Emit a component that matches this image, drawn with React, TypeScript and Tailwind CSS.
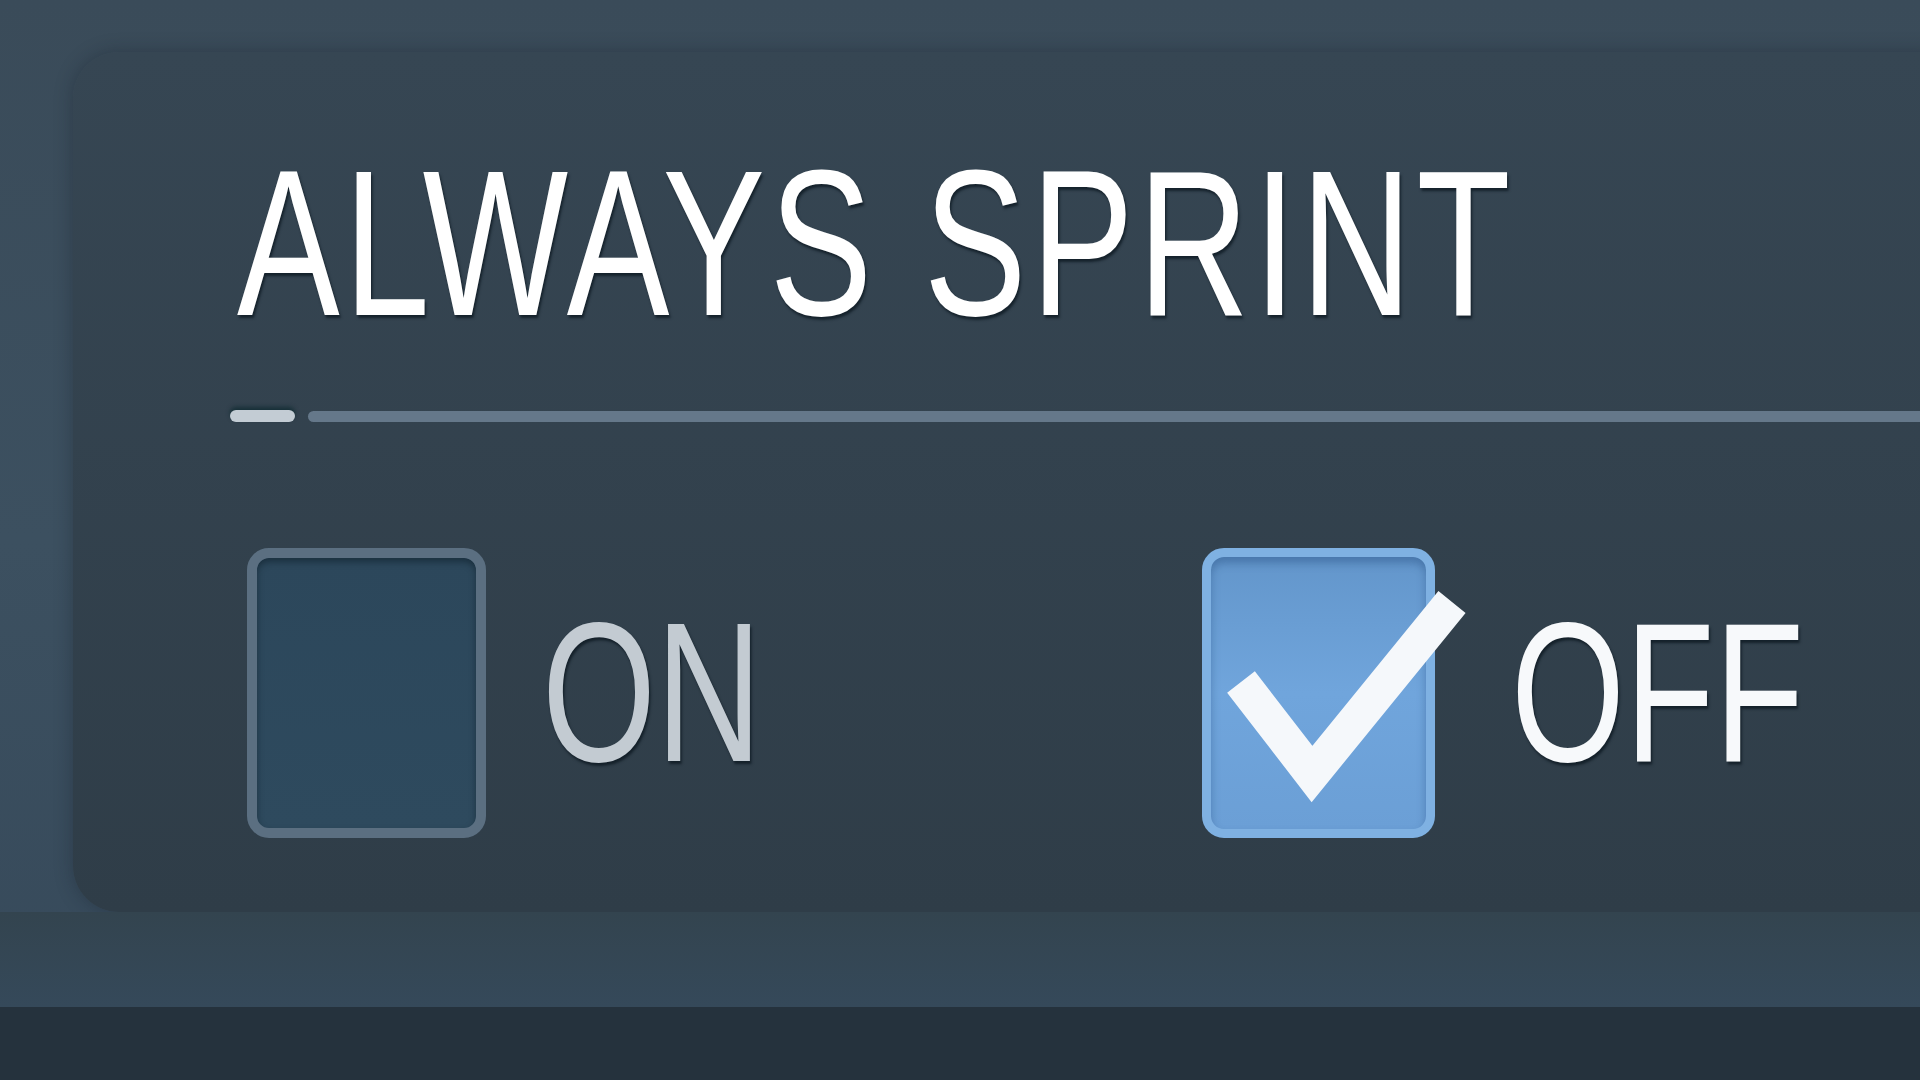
import React from "react";

// condensed caps: the game UI face is narrow, so squeeze Liberation Sans horizontally
const label =
  "inline-block origin-left scale-x-[0.74] font-['Liberation_Sans',sans-serif] leading-none whitespace-nowrap [text-shadow:2px_3px_3px_rgba(8,20,28,0.7)]";

function Box({ checked }: { checked?: boolean }) {
  if (!checked) {
    return (
      <div className="w-[239px] h-[290px] shrink-0 rounded-[22px] border-[10px] border-[#5b6f81] bg-gradient-to-b from-[#2c475b] to-[#2e4a5e] shadow-[inset_0_4px_6px_rgba(10,25,35,0.5)]" />
    );
  }
  return (
    <div className="relative w-[233px] h-[290px] shrink-0 rounded-[22px] border-[9px] border-[#7fb1e2] bg-gradient-to-b from-[#6396cb] via-[#70a5dc] to-[#6b9fd6] shadow-[inset_0_6px_8px_rgba(40,80,130,0.45)]">
      <svg
        className="absolute -left-[9px] -top-[9px] overflow-visible"
        width="233"
        height="290"
        viewBox="0 0 233 290"
      >
        <polyline
          points="39,134 110,226 250,54"
          fill="none"
          stroke="#f5f8fb"
          strokeWidth="35"
          strokeLinejoin="miter"
          strokeLinecap="butt"
        />
      </svg>
    </div>
  );
}

export default function App() {
  return (
    <div className="w-[1920px] h-[1080px] overflow-hidden flex flex-col bg-gradient-to-b from-[#3a4b59] via-[#3c5060] to-[#36495a]">
      <div className="h-[52px] shrink-0" />
      <div className="flex pl-[73px] shrink-0">
        <div className="w-[1900px] h-[860px] shrink-0 rounded-[46px] bg-gradient-to-b from-[#364653] to-[#2f3d48] shadow-[0_0_18px_rgba(20,30,40,0.35)] pt-[87px] pl-[157px]">
          <div className="pl-[7px] h-[208px]">
            <span className={`${label} text-[208px] tracking-[6px] text-white`}>ALWAYS SPRINT</span>
          </div>

          <div className="mt-[63px] flex items-center gap-[13px]">
            <div className="w-[65px] h-[12px] rounded-full bg-[#c3ccd4] shadow-[0_-3px_4px_rgba(10,40,45,0.7)]" />
            <div className="flex-1 h-[11px] rounded-full bg-[#65788a]" />
          </div>

          <div className="mt-[126px] ml-[17px] flex">
            <div className="w-[955px] flex items-center">
              <Box />
              <span className={`${label} text-[198px] ml-[56px] text-[#c3cbd2]`}>ON</span>
            </div>
            <div className="flex items-center">
              <Box checked />
              <span className={`${label} text-[198px] ml-[76px] text-[#f7f9fb]`}>OFF</span>
            </div>
          </div>
        </div>
      </div>
      <div className="h-[95px] shrink-0 bg-gradient-to-b from-[#33444f] to-[#35495a]" />
      <div className="flex-1 bg-[#25323d]" />
    </div>
  );
}
